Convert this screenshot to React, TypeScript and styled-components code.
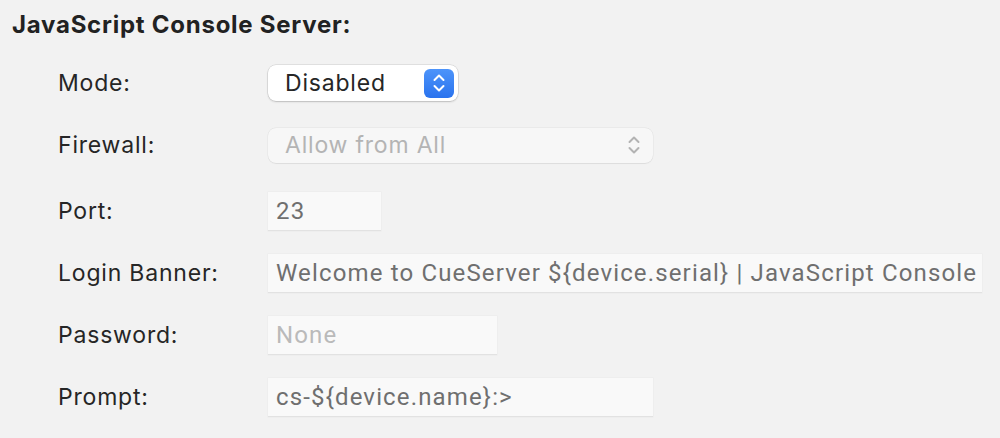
import React from "react";
import styled, { createGlobalStyle } from "styled-components";

const Global = createGlobalStyle`
  html, body { margin: 0; padding: 0; background: #f2f2f2; }
  body { font-family: "Inter", "Liberation Sans", sans-serif; -webkit-font-smoothing: antialiased; }
`;

const Page = styled.div`
  width: 1000px;
  height: 438px;
  background: #f2f2f2;
  box-sizing: border-box;
  padding: 10px 0 0 12px;
  overflow: hidden;
`;

const Title = styled.h1`
  margin: 0;
  height: 42px;
  font-size: 24px;
  letter-spacing: 0.75px;
  line-height: 30px;
  font-weight: 700;
  color: #222222;
`;

const Form = styled.div`
  display: flex;
  flex-direction: column;
  padding-left: 46px;
`;

const Row = styled.div<{ $gapTop?: number }>`
  display: grid;
  grid-template-columns: 210px auto;
  align-items: center;
  height: 62px;
  margin-top: ${(p) => p.$gapTop ?? 0}px;
`;

const Label = styled.div`
  font-size: 23px;
  letter-spacing: 0.8px;
  color: #262626;
  line-height: 28px;
`;

const SelectBox = styled.div<{ $width: number; $disabled?: boolean }>`
  box-sizing: border-box;
  width: ${(p) => p.$width}px;
  height: ${(p) => (p.$disabled ? 35 : 36)}px;
  border-radius: 8px;
  background: ${(p) => (p.$disabled ? "#f7f7f7" : "#ffffff")};
  box-shadow: ${(p) =>
    p.$disabled
      ? "0 0 0 0.5px rgba(0,0,0,0.06), 0 0.5px 1px rgba(0,0,0,0.06)"
      : "0 0 0 0.5px rgba(0,0,0,0.14), 0 1px 2px rgba(0,0,0,0.16)"};
  display: flex;
  align-items: center;
  justify-content: space-between;
  padding: 0 4px 0 17px;
  font-size: 23px;
  letter-spacing: 0.8px;
  color: ${(p) => (p.$disabled ? "#b4b4b4" : "#262626")};
`;

const BlueButton = styled.div`
  width: 30px;
  height: 29px;
  border-radius: 6px;
  background: linear-gradient(#4d94fa, #2a73ee);
  display: flex;
  align-items: center;
  justify-content: center;
`;

const GrayChevrons = styled.div`
  width: 30px;
  height: 29px;
  display: flex;
  align-items: center;
  justify-content: center;
`;

const Field = styled.div<{ $width: number; $placeholder?: boolean }>`
  box-sizing: border-box;
  width: ${(p) => p.$width}px;
  height: 39px;
  background: #f9f9f9;
  border-bottom: 1px solid #e2e2e2;
  box-shadow: 0 0 0 0.5px rgba(0,0,0,0.03);
  display: flex;
  align-items: center;
  padding-left: 8px;
  font-family: "Roboto", "Liberation Sans", sans-serif;
  font-size: 24px;
  letter-spacing: 1.15px;
  color: ${(p) => (p.$placeholder ? "#bababa" : "#6f6f6f")};
  white-space: nowrap;
  overflow: hidden;
`;

const Chevrons = ({ color, width = 2 }: { color: string; width?: number }) => (
  <svg width="14" height="22" viewBox="0 0 14 22" fill="none">
    <path d="M2.5 8 L7 3.5 L11.5 8" stroke={color} strokeWidth={width} strokeLinecap="round" strokeLinejoin="round" />
    <path d="M2.5 14 L7 18.5 L11.5 14" stroke={color} strokeWidth={width} strokeLinecap="round" strokeLinejoin="round" />
  </svg>
);

export default function App() {
  return (
    <>
      <Global />
      <Page>
        <Title>JavaScript Console Server:</Title>
        <Form>
          <Row>
            <Label>Mode:</Label>
            <SelectBox $width={190}>
              <span>Disabled</span>
              <BlueButton>
                <Chevrons color="#ffffff" />
              </BlueButton>
            </SelectBox>
          </Row>
          <Row>
            <Label>Firewall:</Label>
            <SelectBox $width={385} $disabled>
              <span>Allow from All</span>
              <GrayChevrons>
                <Chevrons color="#b3b3b3" />
              </GrayChevrons>
            </SelectBox>
          </Row>
          <Row $gapTop={4}>
            <Label>Port:</Label>
            <Field $width={113}>23</Field>
          </Row>
          <Row>
            <Label>Login Banner:</Label>
            <Field $width={714}>Welcome to CueServer ${"{device.serial}"} | JavaScript Console</Field>
          </Row>
          <Row>
            <Label>Password:</Label>
            <Field $width={229} $placeholder>None</Field>
          </Row>
          <Row>
            <Label>Prompt:</Label>
            <Field $width={385}>cs-${"{device.name}"}:&gt;</Field>
          </Row>
        </Form>
      </Page>
    </>
  );
}
